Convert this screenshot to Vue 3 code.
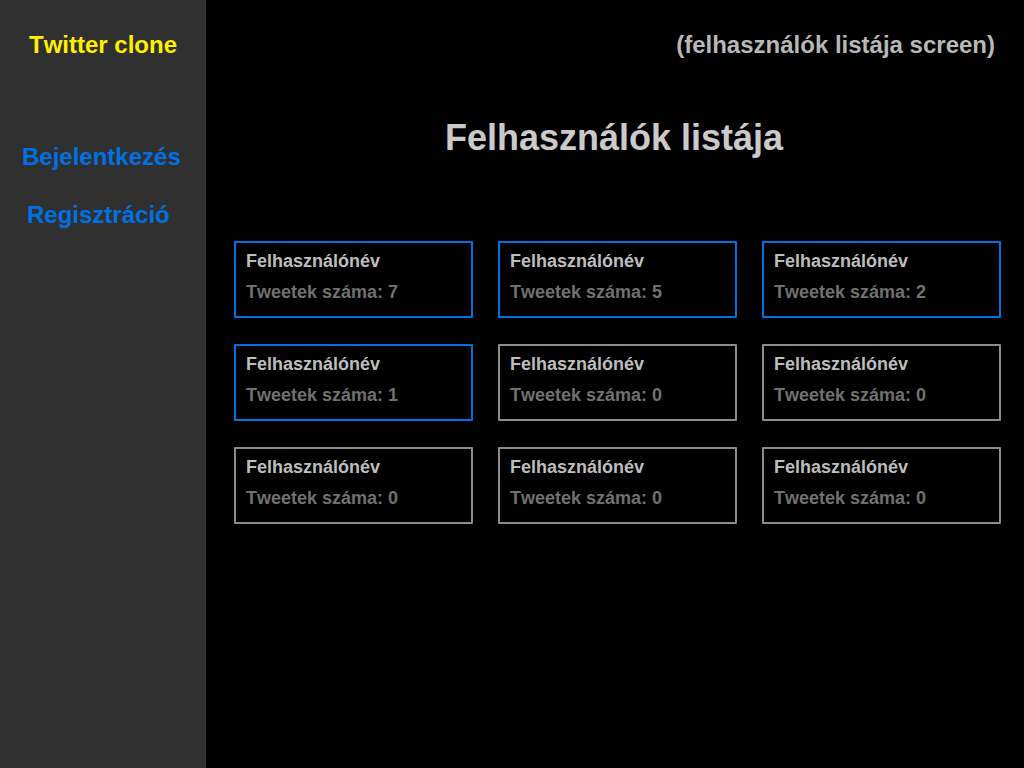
<script setup>
const users = [7, 5, 2, 1, 0, 0, 0, 0, 0].map((tweets, id) => ({
  id,
  name: 'Felhasználónév',
  tweets,
}))
</script>

<template>
  <div class="layout">
    <aside class="sidebar">
      <a class="brand" href="#">Twitter clone</a>
      <nav class="nav">
        <a href="#login">Bejelentkezés</a>
        <a class="register" href="#register">Regisztráció</a>
      </nav>
    </aside>
    <main class="content">
      <p class="screen">(felhasználók listája screen)</p>
      <h1>Felhasználók listája</h1>
      <ul class="users">
        <li v-for="user in users" :key="user.id" class="card" :class="{ active: user.tweets > 0 }">
          <h2>{{ user.name }}</h2>
          <p>Tweetek száma: {{ user.tweets }}</p>
        </li>
      </ul>
    </main>
  </div>
</template>

<style>
body {
  background: #000;
}
</style>

<style scoped>
.layout {
  display: grid;
  grid-template-columns: 206px 1fr;
  min-height: 100vh;
  font-family: "Liberation Sans", Arial, sans-serif;
  font-weight: 700;
  font-kerning: none;
  background: #000;
}

.sidebar {
  display: flex;
  flex-direction: column;
  padding-top: 31px;
  background: #303030;
}

a {
  text-decoration: none;
  font-size: 24px;
  line-height: 28px;
}

.brand {
  text-align: center;
  color: #fff000;
}

.nav {
  display: flex;
  flex-direction: column;
  gap: 30px;
  margin-top: 84px;
  padding-left: 22px;
}

.nav a {
  color: #0071e3;
}

.nav .register {
  padding-left: 5px;
}

.content {
  padding: 31px 23px 24px 28px;
}

p,
h1,
h2 {
  margin: 0;
}

.screen {
  padding-right: 6px;
  font-size: 24px;
  line-height: 28px;
  text-align: right;
  color: #b8b8b8;
}

h1 {
  margin-top: 57px;
  padding-right: 7px;
  font-size: 36px;
  line-height: 44px;
  text-align: center;
  color: #cacaca;
}

.users {
  display: grid;
  grid-template-columns: repeat(3, 1fr);
  gap: 26px 25px;
  margin: 81px 0 0;
  padding: 0;
  list-style: none;
}

.card {
  padding: 8px 10px 14px;
  border: 2px solid #8c8c8c;
  border-radius: 1px;
}

.card.active {
  border-color: #0071e3;
}

.card h2,
.card p {
  font-size: 18px;
  line-height: 20px;
}

.card h2 {
  color: #bdbdbd;
}

.card p {
  margin-top: 11px;
  color: #717171;
}
</style>
